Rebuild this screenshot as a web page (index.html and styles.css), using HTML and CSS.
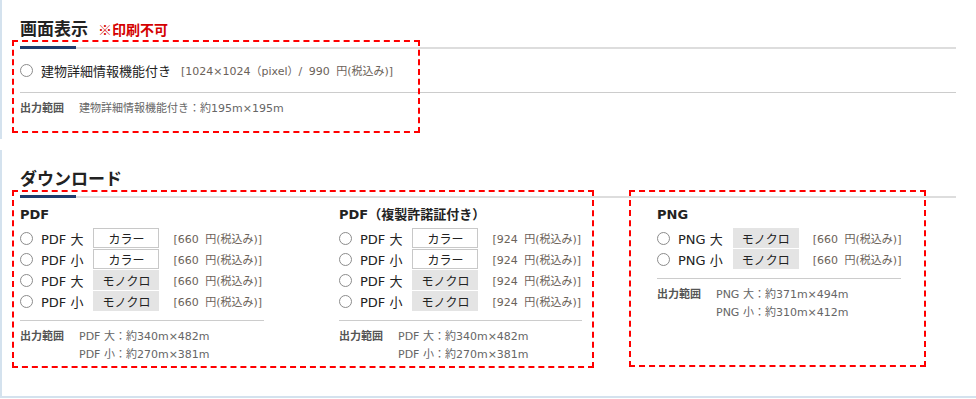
FILE: index.html
```html
<!DOCTYPE html>
<html lang="ja">
<head>
	<meta charset="utf-8">
	<title>画面表示・ダウンロード</title>
	<link rel="stylesheet" href="styles.css">
</head>
<body>
	<div class="panel">
		<h2 class="heading">画面表示<span class="note">※印刷不可</span></h2>
		<div class="option option-wide">
			<span class="radio"></span>
			<span class="label">建物詳細情報機能付き</span>
			<span class="price price-near">[1024×1024（pixel）/ 990 円(税込み)]</span>
		</div>
		<dl class="range range-wide">
			<dt>出力範囲</dt>
			<dd>建物詳細情報機能付き：約195m×195m</dd>
		</dl>
		<div class="mark mark-screen"></div>
	</div>

	<div class="panel panel-last">
		<h2 class="heading">ダウンロード</h2>
		<div class="formats">
			<div class="format">
				<h3>PDF</h3>
				<div class="options">
					<div class="option"><span class="radio"></span><span class="label">PDF 大</span><span class="btn">カラー</span><span class="price">[660 円(税込み)]</span></div>
					<div class="option"><span class="radio"></span><span class="label">PDF 小</span><span class="btn">カラー</span><span class="price">[660 円(税込み)]</span></div>
					<div class="option"><span class="radio"></span><span class="label">PDF 大</span><span class="btn btn-mono">モノクロ</span><span class="price">[660 円(税込み)]</span></div>
					<div class="option"><span class="radio"></span><span class="label">PDF 小</span><span class="btn btn-mono">モノクロ</span><span class="price">[660 円(税込み)]</span></div>
				</div>
				<dl class="range">
					<dt>出力範囲</dt>
					<dd>PDF 大：約340m×482m</dd>
					<dd>PDF 小：約270m×381m</dd>
				</dl>
			</div>
			<div class="format">
				<h3>PDF（複製許諾証付き）</h3>
				<div class="options">
					<div class="option"><span class="radio"></span><span class="label">PDF 大</span><span class="btn">カラー</span><span class="price">[924 円(税込み)]</span></div>
					<div class="option"><span class="radio"></span><span class="label">PDF 小</span><span class="btn">カラー</span><span class="price">[924 円(税込み)]</span></div>
					<div class="option"><span class="radio"></span><span class="label">PDF 大</span><span class="btn btn-mono">モノクロ</span><span class="price">[924 円(税込み)]</span></div>
					<div class="option"><span class="radio"></span><span class="label">PDF 小</span><span class="btn btn-mono">モノクロ</span><span class="price">[924 円(税込み)]</span></div>
				</div>
				<dl class="range">
					<dt>出力範囲</dt>
					<dd>PDF 大：約340m×482m</dd>
					<dd>PDF 小：約270m×381m</dd>
				</dl>
			</div>
			<div class="format">
				<h3>PNG</h3>
				<div class="options">
					<div class="option"><span class="radio"></span><span class="label">PNG 大</span><span class="btn btn-mono">モノクロ</span><span class="price">[660 円(税込み)]</span></div>
					<div class="option"><span class="radio"></span><span class="label">PNG 小</span><span class="btn btn-mono">モノクロ</span><span class="price">[660 円(税込み)]</span></div>
				</div>
				<dl class="range">
					<dt>出力範囲</dt>
					<dd>PNG 大：約371m×494m</dd>
					<dd>PNG 小：約310m×412m</dd>
				</dl>
			</div>
		</div>
		<div class="mark mark-pdf"></div>
		<div class="mark mark-png"></div>
	</div>
</body>
</html>
```

FILE: styles.css
```css
body {
	margin: 0;
	background-color: #fff;
	color: #222;
	font-family: "DejaVu Sans", "Noto Sans CJK JP", sans-serif;
}
.panel {
	position: relative;
	border-left: 2px solid #d4e2ee;
	padding: 0 20px 22px 18px;
}
.panel-last {
	margin-top: 11px;
	padding-bottom: 32px;
	border-bottom: 2px solid #d4e2ee;
}
.heading {
	position: relative;
	margin: 0;
	padding: 18px 0 8px;
	font-size: 17px;
	line-height: 20px;
	font-weight: bold;
	font-family: "Noto Sans CJK JP", sans-serif;
	color: #222;
	border-bottom: 2px solid #ddd;
}
.heading::after {
	content: "";
	position: absolute;
	left: 0;
	bottom: -2px;
	width: 56px;
	height: 3px;
	background-color: #1e3c6e;
}
.note {
	margin-left: 10px;
	font-size: 14px;
	color: #d40000;
}

.option {
	display: flex;
	align-items: center;
	height: 20px;
}
.option-wide {
	margin-top: 11px;
}
.radio {
	width: 13px;
	height: 13px;
	box-sizing: border-box;
	border: 1px solid #8c8c8c;
	border-radius: 50%;
	margin-right: 8px;
	flex: none;
}
.label {
	font-size: 13px;
	color: #222;
	margin-right: 10px;
	white-space: nowrap;
}
.btn {
	display: flex;
	align-items: center;
	justify-content: center;
	width: 66px;
	height: 20px;
	box-sizing: border-box;
	border: 1px solid #c8c8c8;
	background-color: #fff;
	font-size: 12px;
	color: #222;
	flex: none;
}
.btn-mono {
	border-color: #e4e4e4;
	background-color: #e4e4e4;
}
.price {
	margin-left: 14px;
	font-size: 11px;
	word-spacing: 3px;
	color: #6b6259;
	white-space: nowrap;
}
.price-near {
	margin-left: 0;
}

.range {
	display: grid;
	grid-template-columns: 59px 1fr;
	margin: 9px 0 0;
	padding-top: 7px;
	border-top: 1px solid #ccc;
	font-size: 11px;
	line-height: 18px;
	color: #666;
}
.range-wide {
	margin-top: 12px;
	padding-top: 8px;
	line-height: 16px;
}
.range dt {
	font-weight: bold;
	color: #555;
}
.range dd {
	grid-column: 2;
	margin: 0;
	white-space: nowrap;
}

.formats {
	display: grid;
	grid-template-columns: 319px 318px 1fr;
	margin: 8px -20px 0 0;
}
.format {
	padding-right: 75px;
}
.format h3 {
	margin: 0;
	font-size: 13px;
	line-height: 18px;
	font-weight: bold;
	color: #222;
}
.options {
	display: grid;
	row-gap: 1px;
	margin-top: 4px;
}

/* red dashed annotation boxes */
.mark {
	position: absolute;
	box-sizing: border-box;
	border: 2px dashed #ff0000;
	pointer-events: none;
}
.mark-screen {
	left: 10px;
	top: 40px;
	width: 408px;
	height: 93px;
}
.mark-pdf {
	left: 10px;
	top: 40px;
	width: 582px;
	height: 178px;
}
.mark-png {
	left: 627px;
	top: 40px;
	width: 297px;
	height: 177px;
}
```
